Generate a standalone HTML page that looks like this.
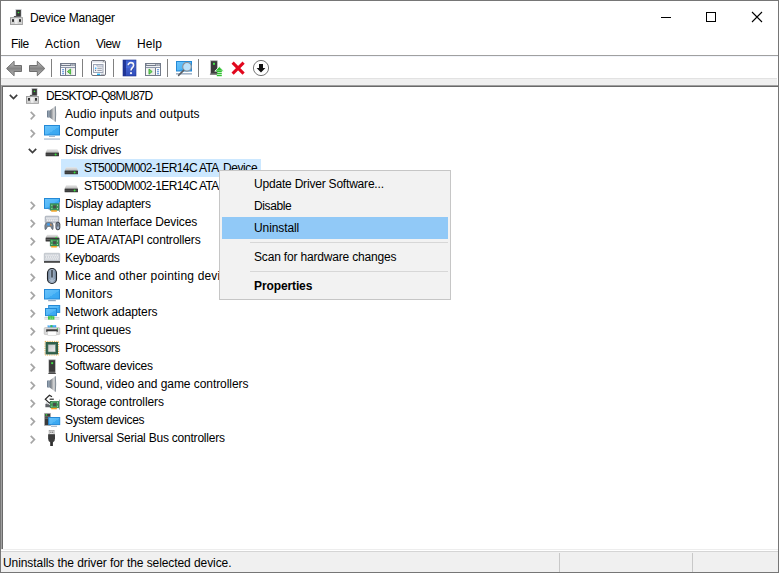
<!DOCTYPE html>
<html><head><meta charset="utf-8">
<style>
*{box-sizing:border-box;margin:0;padding:0}
html,body{width:779px;height:573px;overflow:hidden;background:#fff}
body{font-family:"Liberation Sans",sans-serif;font-size:12px;color:#000;position:relative}
.abs{position:absolute}
svg{position:absolute;overflow:visible}
#win{position:absolute;left:0;top:0;width:779px;height:573px;border:1px solid #767676;background:#fff}
.t{position:absolute;white-space:nowrap;line-height:16px;height:16px}
#title{left:30px;top:10px}
.menu{top:36px}
#mline{left:1px;top:55px;width:777px;height:1px;background:#a0a0a0}
#fline{left:1px;top:56px;width:777px;height:1px;background:#f2f5fb}
#tline{left:1px;top:78px;width:776px;height:1px;background:#e2e2e2}
#strip{left:1px;top:79px;width:776px;height:6px;background:#f0f0f0}
#treeo{left:1px;top:85px;width:777px;height:464px;background:#fff;border-left:1px solid #a0a0a0;border-top:1px solid #a0a0a0}
#tree{left:2px;top:86px;width:776px;height:463px;background:#fff;border-left:1px solid #696969;border-top:1px solid #696969}
#sl1{left:1px;top:549px;width:777px;height:1px;background:#ededed}
#sl2{left:1px;top:551px;width:777px;height:1px;background:#d5d5d5}
#status{left:1px;top:552px;width:777px;height:20px;background:#f0f0f0}
.ssep{top:553px;width:1px;height:19px;background:#c8c8c8}
#sel{left:61px;top:159px;width:200px;height:18px;background:#cce8ff}
.lbl{position:absolute;height:18px;line-height:17px;white-space:nowrap}
#ctx{left:219px;top:170px;width:232px;height:130px;background:#f2f2f2;border:1px solid #c6c6c6}
#hl{left:2px;top:46px;width:226px;height:22px;background:#91c9f7}
.mi{position:absolute;left:34px;white-space:nowrap;line-height:16px}
.msep{left:30px;width:198px;height:1px;background:#d7d7d7}
</style></head><body>
<div id="win"></div>
<div class="t" id="title" style="letter-spacing:-0.192px;">Device Manager</div>
<div class="t menu" style="left:11px;letter-spacing:-0.417px;">File</div>
<div class="t menu" style="left:45px;letter-spacing:0.300px;">Action</div>
<div class="t menu" style="left:96px;letter-spacing:-0.500px;">View</div>
<div class="t menu" style="left:137px;letter-spacing:0.083px;">Help</div>
<div class="abs" id="mline"></div><div class="abs" id="fline"></div><div class="abs" id="tline"></div><div class="abs" id="strip"></div>
<div class="abs" id="treeo"></div><div class="abs" id="tree"></div>
<div class="abs" id="sl1"></div><div class="abs" id="sl2"></div><div class="abs" id="status"></div>
<div class="abs ssep" style="left:559px"></div><div class="abs ssep" style="left:692px"></div>
<div class="abs" id="sel"></div>
<div class="lbl" style="left:46px;top:88px;letter-spacing:-0.764px;">DESKTOP-Q8MU87D</div>
<div class="lbl" style="left:65px;top:106px;letter-spacing:0.109px;">Audio inputs and outputs</div>
<div class="lbl" style="left:65px;top:124px;letter-spacing:0.107px;">Computer</div>
<div class="lbl" style="left:65px;top:142px;letter-spacing:-0.250px;">Disk drives</div>
<div class="lbl" style="left:84px;top:160px;letter-spacing:-0.615px;">ST500DM002-1ER14C ATA<span style="letter-spacing:-0.400px;margin-left:1.3px"> Device</span></div>
<div class="lbl" style="left:84px;top:178px;letter-spacing:-0.615px;">ST500DM002-1ER14C ATA<span style="letter-spacing:-0.400px;margin-left:1.3px"> Device</span></div>
<div class="lbl" style="left:65px;top:196px;letter-spacing:-0.233px;">Display adapters</div>
<div class="lbl" style="left:65px;top:214px;letter-spacing:-0.114px;">Human Interface Devices</div>
<div class="lbl" style="left:65px;top:232px;letter-spacing:-0.146px;">IDE ATA/ATAPI controllers</div>
<div class="lbl" style="left:65px;top:250px;letter-spacing:-0.312px;">Keyboards</div>
<div class="lbl" style="left:65px;top:268px;letter-spacing:0.190px;">Mice and other pointing devices</div>
<div class="lbl" style="left:65px;top:286px;letter-spacing:0.214px;">Monitors</div>
<div class="lbl" style="left:65px;top:304px;letter-spacing:-0.100px;">Network adapters</div>
<div class="lbl" style="left:65px;top:322px;letter-spacing:-0.114px;">Print queues</div>
<div class="lbl" style="left:65px;top:340px;letter-spacing:-0.500px;">Processors</div>
<div class="lbl" style="left:65px;top:358px;letter-spacing:-0.233px;">Software devices</div>
<div class="lbl" style="left:65px;top:376px;letter-spacing:-0.062px;">Sound, video and game controllers</div>
<div class="lbl" style="left:65px;top:394px;letter-spacing:-0.097px;">Storage controllers</div>
<div class="lbl" style="left:65px;top:412px;letter-spacing:-0.346px;">System devices</div>
<div class="lbl" style="left:65px;top:430px;letter-spacing:-0.218px;">Universal Serial Bus controllers</div>
<svg width="779" height="573" viewBox="0 0 779 573" style="left:0;top:0">
<defs>
<linearGradient id="gArr" x1="0" y1="0" x2="0" y2="1"><stop offset="0" stop-color="#c6c6c6"/><stop offset="0.5" stop-color="#848484"/><stop offset="1" stop-color="#b8b8b8"/></linearGradient>
<linearGradient id="gSpk" x1="0" y1="0" x2="1" y2="0"><stop offset="0" stop-color="#6f7c8a"/><stop offset="0.3" stop-color="#8f9398"/><stop offset="0.72" stop-color="#dcdcdc"/><stop offset="0.86" stop-color="#b8bcc0"/><stop offset="1" stop-color="#8a929b"/></linearGradient>
<linearGradient id="gScr" x1="0" y1="0" x2="1" y2="1"><stop offset="0" stop-color="#6ac3fb"/><stop offset="0.55" stop-color="#52b7f7"/><stop offset="0.56" stop-color="#3dabf3"/><stop offset="1" stop-color="#38a5f1"/></linearGradient>
<linearGradient id="gHelp" x1="0" y1="0" x2="0" y2="1"><stop offset="0" stop-color="#3b5fd0"/><stop offset="0.5" stop-color="#4a6cdc"/><stop offset="1" stop-color="#3353c4"/></linearGradient>
<linearGradient id="gDiskTop" x1="0" y1="0" x2="0" y2="1"><stop offset="0" stop-color="#e6e6e6"/><stop offset="1" stop-color="#b9b9b9"/></linearGradient>
<linearGradient id="gMouse" x1="0" y1="0" x2="1" y2="0"><stop offset="0" stop-color="#6f8298"/><stop offset="0.5" stop-color="#a9b9cb"/><stop offset="1" stop-color="#6f8298"/></linearGradient>
<linearGradient id="gChip" x1="0" y1="0" x2="1" y2="1"><stop offset="0" stop-color="#c4c4c4"/><stop offset="1" stop-color="#f0f0f0"/></linearGradient>
</defs>
<g stroke="#000" stroke-width="1" fill="none">
<path d="M661 17.5H671"/>
<rect x="706.5" y="12.5" width="9" height="9"/>
<path d="M752 12L762 22M762 12L752 22" stroke-width="1.1"/>
</g>
<g transform="translate(10,9.85)">
<rect x="0.5" y="7.8" width="11.9" height="6.8" fill="#dcdcdc" stroke="#9e9e9e" stroke-width="1"/>
<rect x="1" y="11.6" width="10.9" height="2.5" fill="#cfcfcf"/><rect x="5" y="8.6" width="2.6" height="5.4" fill="#f4f4f4" opacity="0.8"/>
<rect x="6.1" y="0" width="4.8" height="7" fill="#383838"/>
<rect x="5.8" y="-0.2" width="5.4" height="7.2" fill="none" stroke="#9aa0a8" stroke-width="0.5" opacity="0.7"/>
<path d="M3.9 6.7H6.4" stroke="#3c3c3c" stroke-width="0.9"/>
<circle cx="8.5" cy="2.6" r="0.8" fill="#3fe63f"/>
<rect x="2.1" y="9.3" width="1.8" height="2.7" fill="#222"/><rect x="9.1" y="9.3" width="1.8" height="2.7" fill="#222"/>
</g>
<g transform="translate(26,88.7)">
<rect x="0.5" y="7.8" width="11.9" height="6.8" fill="#dcdcdc" stroke="#9e9e9e" stroke-width="1"/>
<rect x="1" y="11.6" width="10.9" height="2.5" fill="#cfcfcf"/><rect x="5" y="8.6" width="2.6" height="5.4" fill="#f4f4f4" opacity="0.8"/>
<rect x="6.1" y="0" width="4.8" height="7" fill="#383838"/>
<rect x="5.8" y="-0.2" width="5.4" height="7.2" fill="none" stroke="#9aa0a8" stroke-width="0.5" opacity="0.7"/>
<path d="M3.9 6.7H6.4" stroke="#3c3c3c" stroke-width="0.9"/>
<circle cx="8.5" cy="2.6" r="0.8" fill="#3fe63f"/>
<rect x="2.1" y="9.3" width="1.8" height="2.7" fill="#222"/><rect x="9.1" y="9.3" width="1.8" height="2.7" fill="#222"/>
</g>
<path d="M6.6 68.5L14.1 61.2V65.5H21.5V71.5H14.1V75.8Z" fill="url(#gArr)" stroke="#6f6f6f" stroke-width="1" stroke-linejoin="round"/>
<path d="M44.8 68.5L37.3 61.2V65.5H29.5V71.5H37.3V75.8Z" fill="url(#gArr)" stroke="#6f6f6f" stroke-width="1" stroke-linejoin="round"/>
<rect x="51" y="59" width="1" height="18" fill="#808080"/>
<rect x="82" y="59" width="1" height="18" fill="#808080"/>
<rect x="113" y="59" width="1" height="18" fill="#808080"/>
<rect x="167" y="59" width="1" height="18" fill="#808080"/>
<rect x="198" y="59" width="1" height="18" fill="#808080"/>
<g transform="translate(60,63)">
<rect x="0.5" y="0.5" width="15" height="12" fill="#fff" stroke="#737b8a"/>
<rect x="1" y="1" width="14" height="1" fill="#7e889b"/><rect x="1" y="2" width="14" height="1" fill="#737b8a"/>
<rect x="1.6" y="1.1" width="8.6" height="0.9" fill="#f2f4f8"/><rect x="11.3" y="1.4" width="1.2" height="1.2" fill="#fff"/><rect x="13.3" y="1.4" width="1.2" height="1.2" fill="#fff"/>
<rect x="1" y="3" width="14" height="1" fill="#eef0f4"/><rect x="1" y="4" width="14" height="1" fill="#8d97ab"/>
<rect x="5" y="5" width="1" height="7" fill="#737b8a"/>
<rect x="6" y="5" width="9" height="7" fill="#ececec"/><rect x="13" y="6" width="2" height="6" fill="#f8f8f8"/>
<rect x="2" y="6.2" width="2.2" height="1" rx="0.5" fill="#3f7fd6"/>
<rect x="2" y="8.2" width="2.2" height="1" rx="0.5" fill="#3f7fd6"/>
<rect x="2" y="10.2" width="2.2" height="1" rx="0.5" fill="#3f7fd6"/>
<path d="M10.6 6L7.4 8.6L10.6 11.2Z" fill="#74d664" stroke="#33a82a" stroke-width="0.8"/>
</g>
<g transform="translate(145,63)">
<rect x="0.5" y="0.5" width="15" height="12" fill="#fff" stroke="#737b8a"/>
<rect x="1" y="1" width="14" height="1" fill="#7e889b"/><rect x="1" y="2" width="14" height="1" fill="#737b8a"/>
<rect x="1.6" y="1.1" width="8.6" height="0.9" fill="#f2f4f8"/><rect x="11.3" y="1.4" width="1.2" height="1.2" fill="#fff"/><rect x="13.3" y="1.4" width="1.2" height="1.2" fill="#fff"/>
<rect x="1" y="3" width="14" height="1" fill="#eef0f4"/><rect x="1" y="4" width="14" height="1" fill="#8d97ab"/>
<rect x="10" y="5" width="1" height="7" fill="#737b8a"/>
<rect x="1" y="5" width="9" height="7" fill="#ececec"/><rect x="1" y="6" width="2" height="6" fill="#f8f8f8"/>
<rect x="11.9" y="6.2" width="2.2" height="1" rx="0.5" fill="#3f7fd6"/>
<rect x="11.9" y="8.2" width="2.2" height="1" rx="0.5" fill="#3f7fd6"/>
<rect x="11.9" y="10.2" width="2.2" height="1" rx="0.5" fill="#3f7fd6"/>
<path d="M4 6L7.2 8.6L4 11.2Z" fill="#74d664" stroke="#33a82a" stroke-width="0.8"/>
</g>
<g transform="translate(91,60)">
<rect x="0.5" y="0.5" width="14" height="15" rx="1.5" fill="#fff" stroke="#70727c"/>
<rect x="1" y="1" width="13" height="1.6" fill="#dfe2ea"/><path d="M12 1.2l1.2 1.2m0-1.2l-1.2 1.2" stroke="#555" stroke-width="0.5"/>
<rect x="2.5" y="4.5" width="9.5" height="8" fill="#f1f3f8" stroke="#9ea5b6"/>
<path d="M6 4.5V6H12" stroke="#9ea5b6" fill="none"/><rect x="6.5" y="5" width="5" height="0.8" fill="#d5d9e4"/>
<rect x="4" y="7.6" width="1.3" height="1.3" fill="#1ea5ff"/><rect x="6.4" y="7.8" width="4.4" height="0.9" fill="#8b8f9c"/>
<rect x="4" y="9.8" width="1.1" height="1.1" fill="#70727c"/><rect x="6.4" y="9.9" width="4.4" height="0.9" fill="#8b8f9c"/>
<rect x="6" y="13.6" width="3.2" height="1.4" fill="#27b4f5"/><rect x="10" y="13.6" width="3.4" height="1.4" fill="#b8bcc6"/>
</g>
<g transform="translate(123,60)">
<rect x="0" y="0" width="13" height="16" fill="url(#gHelp)"/><rect x="0" y="0" width="3" height="16" fill="#22389a"/><rect x="0" y="8" width="13" height="8" fill="#1a2f8a" opacity="0.18"/>
<rect x="0" y="0" width="13" height="16" fill="none" stroke="#1c2f8e" stroke-width="0.6"/>
<path d="M5.2 5.2C5.2 1.8 10.6 1.8 10.6 5.2C10.6 7.6 8 7.8 8 10.6" fill="none" stroke="#2a3a7a" stroke-width="2.6" opacity="0.45" transform="translate(0.5,0.6)"/>
<path d="M5.2 5.2C5.2 1.8 10.6 1.8 10.6 5.2C10.6 7.6 8 7.8 8 10.6" fill="none" stroke="#f4f4fa" stroke-width="1.6"/>
<circle cx="8" cy="13.2" r="1.1" fill="#f4f4fa"/>
</g>
<g transform="translate(176,61)">
<rect x="0.5" y="0.5" width="15" height="9.5" fill="url(#gScr)" stroke="#2489d6"/>
<rect x="0" y="12.2" width="16" height="1.3" fill="#8ea4bc"/>
<circle cx="11" cy="5.8" r="4.3" fill="#b9e0fa" stroke="#8d9196" stroke-width="1.1"/>
<path d="M7.6 9.4L2.6 14.4" stroke="#5a5f66" stroke-width="1.5" stroke-linecap="round"/>
</g>
<g transform="translate(210,60)">
<rect x="1" y="0.8" width="6.2" height="12.5" fill="#3a3a3a"/><rect x="0.6" y="0.8" width="7" height="12.5" fill="none" stroke="#b0b0b0" stroke-width="0.7"/>
<rect x="3" y="2.8" width="2" height="2" fill="#43e047"/>
<path d="M-0.3 14.6L0.8 13.4H7.4L7 14.6Z" fill="#111"/>
<path d="M9.3 6.6L13.8 11.2H4.8Z" fill="#2fc12f" stroke="#fff" stroke-width="0.8"/>
<rect x="6.8" y="11" width="5" height="1.3" fill="#2fc12f"/><rect x="6.8" y="13" width="5" height="1.3" fill="#2fc12f"/><rect x="6.8" y="15" width="5" height="1.2" fill="#2fc12f"/>
</g>
<path d="M232.6 62.6L243.6 73.6M243.6 62.6L232.6 73.6" stroke="#e1071d" stroke-width="3.1" stroke-linecap="butt"/>
<circle cx="261" cy="68" r="7.6" fill="#fff" stroke="#666" stroke-width="0.9"/>
<path d="M259 64H263V68H265.4L261 72.6L256.6 68H259Z" fill="#111"/>
<path d="M9.8 94.9l3.7 3.6l3.7-3.6" fill="none" stroke="#3e3e3e" stroke-width="1.7"/>
<path d="M28.8 148.9l3.7 3.6l3.7-3.6" fill="none" stroke="#3e3e3e" stroke-width="1.7"/>
<path d="M30.7 111.9l3.7 3.7l-3.7 3.7" fill="none" stroke="#a6a6a6" stroke-width="1.7"/>
<path d="M30.7 129.9l3.7 3.7l-3.7 3.7" fill="none" stroke="#a6a6a6" stroke-width="1.7"/>
<path d="M30.7 201.9l3.7 3.7l-3.7 3.7" fill="none" stroke="#a6a6a6" stroke-width="1.7"/>
<path d="M30.7 219.9l3.7 3.7l-3.7 3.7" fill="none" stroke="#a6a6a6" stroke-width="1.7"/>
<path d="M30.7 237.9l3.7 3.7l-3.7 3.7" fill="none" stroke="#a6a6a6" stroke-width="1.7"/>
<path d="M30.7 255.9l3.7 3.7l-3.7 3.7" fill="none" stroke="#a6a6a6" stroke-width="1.7"/>
<path d="M30.7 273.9l3.7 3.7l-3.7 3.7" fill="none" stroke="#a6a6a6" stroke-width="1.7"/>
<path d="M30.7 291.9l3.7 3.7l-3.7 3.7" fill="none" stroke="#a6a6a6" stroke-width="1.7"/>
<path d="M30.7 309.9l3.7 3.7l-3.7 3.7" fill="none" stroke="#a6a6a6" stroke-width="1.7"/>
<path d="M30.7 327.9l3.7 3.7l-3.7 3.7" fill="none" stroke="#a6a6a6" stroke-width="1.7"/>
<path d="M30.7 345.9l3.7 3.7l-3.7 3.7" fill="none" stroke="#a6a6a6" stroke-width="1.7"/>
<path d="M30.7 363.9l3.7 3.7l-3.7 3.7" fill="none" stroke="#a6a6a6" stroke-width="1.7"/>
<path d="M30.7 381.9l3.7 3.7l-3.7 3.7" fill="none" stroke="#a6a6a6" stroke-width="1.7"/>
<path d="M30.7 399.9l3.7 3.7l-3.7 3.7" fill="none" stroke="#a6a6a6" stroke-width="1.7"/>
<path d="M30.7 417.9l3.7 3.7l-3.7 3.7" fill="none" stroke="#a6a6a6" stroke-width="1.7"/>
<path d="M30.7 435.9l3.7 3.7l-3.7 3.7" fill="none" stroke="#a6a6a6" stroke-width="1.7"/>
<g transform="translate(47,106)">
<path d="M2.6 4.6L8.4 0.2Q9 8 8.4 15.8L2.6 11.4Z" fill="url(#gSpk)"/>
<path d="M8.3 0.3Q9.1 8 8.3 15.7" stroke="#7c8690" stroke-width="0.9" fill="none"/>
<rect x="0" y="4.6" width="2.7" height="6.8" fill="#6c7c8e"/><rect x="0.9" y="4.6" width="1" height="6.8" fill="#94a2b2"/>
</g>
<g transform="translate(47,376)">
<path d="M2.6 4.6L8.4 0.2Q9 8 8.4 15.8L2.6 11.4Z" fill="url(#gSpk)"/>
<path d="M8.3 0.3Q9.1 8 8.3 15.7" stroke="#7c8690" stroke-width="0.9" fill="none"/>
<rect x="0" y="4.6" width="2.7" height="6.8" fill="#6c7c8e"/><rect x="0.9" y="4.6" width="1" height="6.8" fill="#94a2b2"/>
</g>
<rect x="44.5" y="125.5" width="15" height="9.5" fill="url(#gScr)" stroke="#2489d6"/>
<rect x="49.0" y="136.1" width="6" height="0.9" fill="#9db2c8"/>
<rect x="44" y="138.5" width="16" height="1.1" fill="#9fb4ca"/>
<rect x="44.5" y="289.5" width="15" height="9.5" fill="url(#gScr)" stroke="#2489d6"/>
<rect x="49.0" y="300.1" width="6" height="0.9" fill="#9db2c8"/>
<rect x="48" y="300.2" width="8" height="1" fill="#8ea4bc"/>
<g transform="translate(45.4,149)">
<path d="M1.8 0.3H12L13.6 3.6H0.2Z" fill="url(#gDiskTop)"/>
<rect x="0.2" y="3.5" width="13.4" height="3.8" rx="0.6" fill="#3a3a3a"/><rect x="0.6" y="5.2" width="12.6" height="0.5" fill="#555"/>
<circle cx="10.2" cy="5.4" r="1" fill="#35e63a"/>
</g>
<g transform="translate(64.4,167)">
<path d="M1.8 0.3H12L13.6 3.6H0.2Z" fill="url(#gDiskTop)"/>
<rect x="0.2" y="3.5" width="13.4" height="3.8" rx="0.6" fill="#3a3a3a"/><rect x="0.6" y="5.2" width="12.6" height="0.5" fill="#555"/>
<circle cx="10.2" cy="5.4" r="1" fill="#35e63a"/>
</g>
<g transform="translate(64.4,185)">
<path d="M1.8 0.3H12L13.6 3.6H0.2Z" fill="url(#gDiskTop)"/>
<rect x="0.2" y="3.5" width="13.4" height="3.8" rx="0.6" fill="#3a3a3a"/><rect x="0.6" y="5.2" width="12.6" height="0.5" fill="#555"/>
<circle cx="10.2" cy="5.4" r="1" fill="#35e63a"/>
</g>
<rect x="44.5" y="198.5" width="15" height="9.9" fill="url(#gScr)" stroke="#2489d6"/>
<rect x="48.5" y="208.8" width="3" height="0.9" fill="#7f97b0"/>
<g transform="translate(50.2,203.8)">
<rect x="0" y="0" width="8.8" height="6.4" fill="#3d9a57"/><rect x="0" y="0" width="8.8" height="6.4" fill="none" stroke="#2c7a43" stroke-width="0.6"/>
<rect x="2.8" y="1.6" width="3.4" height="3" fill="#4a4f4c"/>
<rect x="1.2" y="1" width="0.9" height="0.9" fill="#cfe8d4"/><rect x="6.9" y="1" width="0.9" height="0.9" fill="#cfe8d4"/><rect x="1.2" y="4.4" width="0.9" height="0.9" fill="#cfe8d4"/><rect x="6.9" y="4.4" width="0.9" height="0.9" fill="#cfe8d4"/>
<rect x="1" y="6.4" width="5.6" height="1.5" fill="#f2a11c"/><rect x="2.7" y="6.4" width="0.4" height="1.5" fill="#fff3"/><rect x="4.6" y="6.4" width="0.4" height="1.5" fill="#fff3"/>
<path d="M9.3 -1.8V8.2" stroke="#9aa0a6" stroke-width="0.9"/>
</g>
<g transform="translate(44,216)">
<rect x="1.2" y="0.2" width="13.6" height="6.6" rx="0.8" fill="#c4c9d1"/><rect x="1.2" y="0.2" width="13.6" height="6.6" rx="0.8" fill="none" stroke="#979fab" stroke-width="0.7"/>
<rect x="2.3" y="1.6" width="1.3" height="1.1" fill="#fff"/><rect x="2.9" y="3.6" width="1.3" height="1.1" fill="#fff"/>
<rect x="4.3" y="1.6" width="1.3" height="1.1" fill="#fff"/><rect x="4.8" y="3.6" width="1.3" height="1.1" fill="#fff"/>
<rect x="6.3" y="1.6" width="1.3" height="1.1" fill="#fff"/><rect x="6.699999999999999" y="3.6" width="1.3" height="1.1" fill="#fff"/>
<rect x="8.3" y="1.6" width="1.3" height="1.1" fill="#fff"/><rect x="8.6" y="3.6" width="1.3" height="1.1" fill="#fff"/>
<rect x="10.3" y="1.6" width="1.3" height="1.1" fill="#fff"/><rect x="10.5" y="3.6" width="1.3" height="1.1" fill="#fff"/>
<rect x="12.3" y="1.6" width="1.3" height="1.1" fill="#fff"/><rect x="12.4" y="3.6" width="1.3" height="1.1" fill="#fff"/>
<path d="M1 13.4Q0.2 8.5 2 7Q5 6.2 8.2 7Q9.8 8.5 9 13.4Q8.2 14 7.4 12L6.6 10.4H3.6L2.8 12Q2 14 1 13.4Z" fill="#7c8794" stroke="#4e5863" stroke-width="0.6"/>
<rect x="3.2" y="7.3" width="2.6" height="2.2" fill="#3f9df0"/><path d="M6.4 7.4L8 9.6H6.4Z" fill="#f08a24"/>
<rect x="12" y="6.2" width="3.8" height="7.6" rx="1.9" fill="#9fb0c4" stroke="#2b2f36" stroke-width="0.9"/><path d="M13.9 7.2V10.6" stroke="#2b2f36" stroke-width="0.8"/>
</g>
<g transform="translate(45.4,234.4)">
<path d="M1.8 0.3H12L13.6 3.2H0.2Z" fill="url(#gDiskTop)"/><rect x="0.2" y="3.1" width="13.4" height="4" rx="0.6" fill="#3a3a3a"/><rect x="1" y="4.6" width="6" height="0.7" fill="#777"/>
<path d="M9.6 3.6l1.2-1.4l1.2 1.4z" fill="#35e03a"/>
</g>
<g transform="translate(50.2,239.6)">
<rect x="0" y="0" width="8.8" height="6.4" fill="#3d9a57"/><rect x="0" y="0" width="8.8" height="6.4" fill="none" stroke="#2c7a43" stroke-width="0.6"/>
<rect x="2.8" y="1.6" width="3.4" height="3" fill="#4a4f4c"/>
<rect x="1.2" y="1" width="0.9" height="0.9" fill="#cfe8d4"/><rect x="6.9" y="1" width="0.9" height="0.9" fill="#cfe8d4"/><rect x="1.2" y="4.4" width="0.9" height="0.9" fill="#cfe8d4"/><rect x="6.9" y="4.4" width="0.9" height="0.9" fill="#cfe8d4"/>
<rect x="1" y="6.4" width="5.6" height="1.5" fill="#f2a11c"/><rect x="2.7" y="6.4" width="0.4" height="1.5" fill="#fff3"/><rect x="4.6" y="6.4" width="0.4" height="1.5" fill="#fff3"/>
<path d="M9.3 -1.8V8.2" stroke="#9aa0a6" stroke-width="0.9"/>
</g>
<g transform="translate(44,253)">
<rect x="0.2" y="0.2" width="15.6" height="8.4" rx="0.8" fill="#c6cbd2" stroke="#aeb4bc" stroke-width="0.5"/>
<rect x="1.4" y="1.6" width="1.25" height="1.1" fill="#fff"/>
<rect x="3.3499999999999996" y="1.6" width="1.25" height="1.1" fill="#fff"/>
<rect x="5.3" y="1.6" width="1.25" height="1.1" fill="#fff"/>
<rect x="7.25" y="1.6" width="1.25" height="1.1" fill="#fff"/>
<rect x="9.2" y="1.6" width="1.25" height="1.1" fill="#fff"/>
<rect x="11.15" y="1.6" width="1.25" height="1.1" fill="#fff"/>
<rect x="13.1" y="1.6" width="1.25" height="1.1" fill="#fff"/>
<rect x="1.7999999999999998" y="3.5" width="1.25" height="1.1" fill="#fff"/>
<rect x="3.7499999999999996" y="3.5" width="1.25" height="1.1" fill="#fff"/>
<rect x="5.7" y="3.5" width="1.25" height="1.1" fill="#fff"/>
<rect x="7.65" y="3.5" width="1.25" height="1.1" fill="#fff"/>
<rect x="9.6" y="3.5" width="1.25" height="1.1" fill="#fff"/>
<rect x="11.55" y="3.5" width="1.25" height="1.1" fill="#fff"/>
<rect x="13.5" y="3.5" width="1.25" height="1.1" fill="#fff"/>
<rect x="1.4" y="5.4" width="1.25" height="1.1" fill="#fff"/>
<rect x="3.3499999999999996" y="5.4" width="1.25" height="1.1" fill="#fff"/>
<rect x="5.3" y="5.4" width="1.25" height="1.1" fill="#fff"/>
<rect x="7.25" y="5.4" width="1.25" height="1.1" fill="#fff"/>
<rect x="9.2" y="5.4" width="1.25" height="1.1" fill="#fff"/>
<rect x="11.15" y="5.4" width="1.25" height="1.1" fill="#fff"/>
<rect x="13.1" y="5.4" width="1.25" height="1.1" fill="#fff"/>
<rect x="0" y="8.2" width="16" height="1.5" fill="#2a2a2a"/>
</g>
<rect x="47.5" y="268.5" width="9" height="15" rx="4.5" fill="url(#gMouse)" stroke="#1f2328" stroke-width="1.1"/>
<path d="M52 270V277.4" stroke="#1f2328" stroke-width="1.2"/>
<path d="M49.2 279Q52 283.2 54.8 279" stroke="#c6d2df" stroke-width="0.8" fill="none" opacity="0.7"/>
<rect x="48.7" y="305.5" width="11" height="6.9" fill="url(#gScr)" stroke="#2489d6"/>
<rect x="45.5" y="308.5" width="11" height="7.1" fill="url(#gScr)" stroke="#2489d6"/>
<rect x="44.4" y="317" width="15" height="2.6" fill="#d4d6d9"/><rect x="44.4" y="318" width="15" height="0.7" fill="#f3f3f3"/>
<rect x="48" y="316.2" width="6.4" height="3.4" fill="#44c24a"/><rect x="50.6" y="315.6" width="1.2" height="1.6" fill="#44c24a"/><rect x="49.8" y="317.4" width="0.8" height="2.2" fill="#8fe092"/><rect x="51.8" y="317.4" width="0.8" height="2.2" fill="#8fe092"/>
<g transform="translate(44,325)">
<rect x="3.6" y="0.2" width="8.6" height="3" fill="#3aa2ee"/><rect x="6.6" y="0.2" width="1.8" height="3" fill="#3fc24a"/><rect x="4.6" y="0.2" width="1" height="1.2" fill="#fff"/><rect x="9.4" y="0.4" width="1.6" height="1" fill="#6fd0ff"/>
<rect x="0.2" y="2.6" width="15.6" height="7" rx="1" fill="#d9d9d9" stroke="#a9a9a9" stroke-width="0.5"/>
<rect x="12.8" y="3.2" width="1.2" height="1.1" fill="#3fe047"/>
<rect x="2.2" y="4.3" width="11.6" height="2.5" fill="#3a3a3a"/>
<rect x="3.8" y="6.4" width="8.4" height="4.2" fill="#fdfdfd" stroke="#c9c9c9" stroke-width="0.5"/>
</g>
<g transform="translate(44.6,341)">
<rect x="0.4" y="0.4" width="13.6" height="13.6" fill="none" stroke="#e3a336" stroke-width="1" stroke-dasharray="0.9 0.9"/>
<rect x="1" y="1" width="12.4" height="12.4" fill="#2f5f49"/>
<rect x="3.4" y="3.4" width="7.6" height="7.6" fill="url(#gChip)" stroke="#5a7e6c" stroke-width="0.6"/>
</g>
<g transform="translate(48,359.6)">
<rect x="1" y="0.2" width="6.2" height="12.4" fill="#3a3a3a"/><rect x="0.7" y="0.2" width="6.8" height="12.4" fill="none" stroke="#b8b8b8" stroke-width="0.7"/>
<rect x="3.2" y="2.6" width="1.9" height="1.9" fill="#43e047"/>
<path d="M0 14.2L1.2 12.8H7L8.2 14.2Z" fill="#111"/>
</g>
<g transform="translate(44,394)">
<path d="M8 2.8L5.4 1.3L1.3 5.2L5.4 9.1L8 7.4" fill="none" stroke="#2a2a2a" stroke-width="1.2" stroke-linejoin="miter"/>
<path d="M5.6 5.2H9.8" stroke="#2a2a2a" stroke-width="1.2"/>
<path d="M1.4 10L3.2 9.2L6.4 11.6L6 13.2H1.4Z" fill="#5d6166"/><path d="M2 8.6L4 10" stroke="#c9ccd0" stroke-width="1.2"/>
</g>
<g transform="translate(50.2,401.4)">
<rect x="0" y="0" width="8.8" height="6.4" fill="#3d9a57"/><rect x="0" y="0" width="8.8" height="6.4" fill="none" stroke="#2c7a43" stroke-width="0.6"/>
<rect x="2.8" y="1.6" width="3.4" height="3" fill="#4a4f4c"/>
<rect x="1.2" y="1" width="0.9" height="0.9" fill="#cfe8d4"/><rect x="6.9" y="1" width="0.9" height="0.9" fill="#cfe8d4"/><rect x="1.2" y="4.4" width="0.9" height="0.9" fill="#cfe8d4"/><rect x="6.9" y="4.4" width="0.9" height="0.9" fill="#cfe8d4"/>
<rect x="1" y="6.4" width="5.6" height="1.5" fill="#f2a11c"/><rect x="2.7" y="6.4" width="0.4" height="1.5" fill="#fff3"/><rect x="4.6" y="6.4" width="0.4" height="1.5" fill="#fff3"/>
<path d="M9.3 -1.8V8.2" stroke="#9aa0a6" stroke-width="0.9"/>
</g>
<g transform="translate(44,413)">
<rect x="0.4" y="0.3" width="6.2" height="12.2" fill="#3a3a3a" stroke="#b8b8b8" stroke-width="0.7"/>
<rect x="1.6" y="1.2" width="1.6" height="1.4" fill="#43e047"/><rect x="1" y="3.6" width="5" height="0.6" fill="#9a9a9a"/><rect x="1" y="5.2" width="5" height="0.6" fill="#777"/>
</g>
<rect x="48.7" y="417.5" width="11" height="7.1" fill="url(#gScr)" stroke="#2489d6"/>
<rect x="51" y="425.8" width="6" height="0.9" fill="#8ea4bc"/>
<g transform="translate(48,430)">
<rect x="1.1" y="0.3" width="5" height="4.2" fill="#e6e6e6" stroke="#8f8f8f" stroke-width="0.6"/><rect x="2.4" y="1.6" width="1" height="1.2" fill="#555"/><rect x="4.2" y="1.6" width="1" height="1.2" fill="#555"/>
<path d="M0.1 4.2H7V8.6Q7 11.6 5 12.2H2.1Q0.1 11.6 0.1 8.6Z" fill="#3c3c3c"/>
<rect x="2.2" y="12" width="2.7" height="4" fill="#2e2e2e"/>
</g>
</svg>
<div class="abs" id="ctx"><div class="abs" id="hl"></div>
<div class="mi" style="top:5px;letter-spacing:-0.198px;">Update Driver Software...</div>
<div class="mi" style="top:27px;letter-spacing:-0.375px;">Disable</div>
<div class="mi" style="top:49px;letter-spacing:-0.094px;">Uninstall</div>
<div class="mi" style="top:78px;letter-spacing:-0.179px;">Scan for hardware changes</div>
<div class="mi" style="top:107px;letter-spacing:-0.111px;font-weight:bold;">Properties</div>
<div class="abs msep" style="top:71px"></div><div class="abs msep" style="top:100px"></div></div>
<div class="t" style="left:3px;top:555px;letter-spacing:-0.080px;">Uninstalls the driver for the selected device.</div>
</body></html>
